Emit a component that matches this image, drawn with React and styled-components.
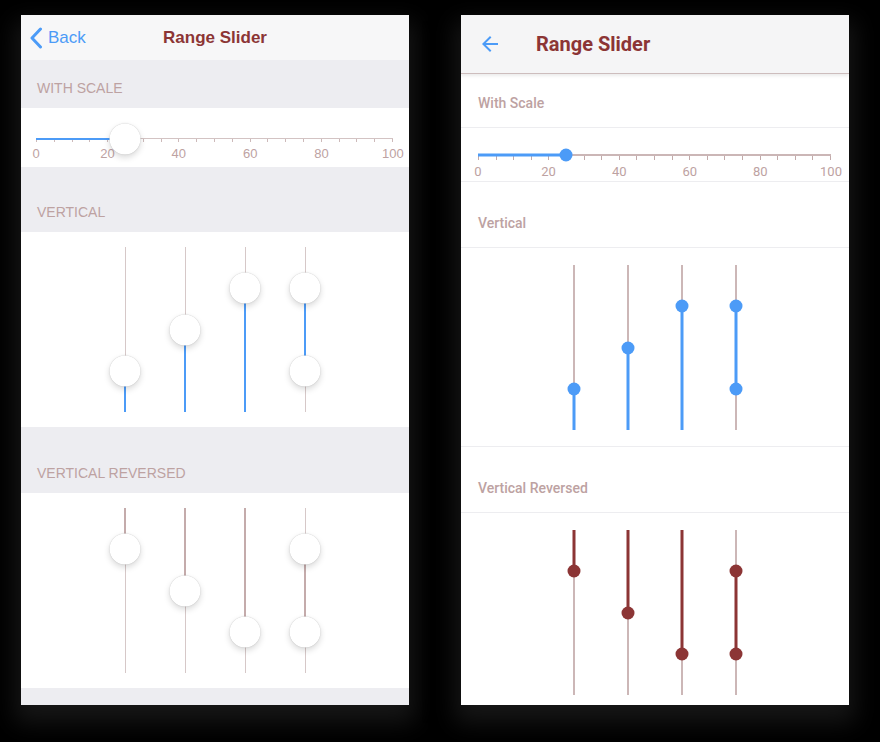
import styled, { createGlobalStyle } from "styled-components";

const BLUE = "#4c9bf7";
const MAROON = "#8c3535";
const ROSE = "#bda2a2";
const ROSE_SOLID = "#c4abab";

const GlobalStyle = createGlobalStyle`
  html, body { margin: 0; padding: 0; background: #000; }
  * { box-sizing: border-box; }
`;

const Stage = styled.div`
  width: 880px;
  height: 742px;
  background: #000;
  display: flex;
  align-items: flex-start;
  gap: 52px;
  padding: 15px 0 0 21px;
`;

const Phone = styled.div`
  width: 388px;
  height: 690px;
  background: ${(p) => (p.$md ? "#fff" : "#ededf1")};
  overflow: hidden;
  display: flex;
  flex-direction: column;
  box-shadow: 0 12px 22px 6px #161616;
  font-family: ${(p) =>
    p.$md ? 'Roboto, "Liberation Sans", sans-serif' : '"Liberation Sans", Arial, sans-serif'};
`;

/* ---------- iOS parts ---------- */

const IosNav = styled.div`
  flex: none;
  height: 45px;
  background: #f7f7f8;
  display: grid;
  grid-template-columns: 1fr auto 1fr;
  align-items: center;
`;

const BackButton = styled.div`
  display: flex;
  align-items: center;
  gap: 5px;
  padding-left: 8px;
  color: ${BLUE};
  font-size: 17px;
`;

const IosTitle = styled.div`
  font-size: 17px;
  font-weight: 700;
  color: ${MAROON};
`;

const IosSection = styled.div`
  flex: none;
  height: ${(p) => p.$h}px;
  display: flex;
  align-items: flex-end;
  padding: 0 16px 12px;
  background: #ededf1;
  color: ${ROSE};
  font-size: 14px;
  line-height: 16px;
  text-transform: uppercase;
`;

const IosRow = styled.div`
  flex: none;
  height: ${(p) => p.$h}px;
  background: #fff;
`;

/* ---------- Material parts ---------- */

const MdBar = styled.div`
  flex: none;
  height: 59px;
  display: flex;
  align-items: center;
  padding-left: 17px;
  background: #f5f5f6;
  border-bottom: 1px solid #cdbdbd;
  box-shadow: 0 2px 3px rgba(0, 0, 0, 0.08);
  position: relative;
  z-index: 1;
`;

const MdTitle = styled.div`
  margin-left: 34px;
  font-size: 20px;
  font-weight: 700;
  color: ${MAROON};
`;

const MdSection = styled.div`
  flex: none;
  height: ${(p) => p.$h}px;
  display: flex;
  align-items: flex-end;
  padding: 0 17px 16px;
  color: ${ROSE};
  font-size: 14px;
  font-weight: 500;
  line-height: 16px;
  border-bottom: 1px solid #ededf0;
`;

const MdRow = styled.div`
  flex: none;
  height: ${(p) => p.$h}px;
  border-bottom: ${(p) => (p.$last ? "none" : "1px solid #ededf0")};
`;

/* ---------- slider parts ---------- */

const HWrap = styled.div`
  padding: ${(p) => (p.$md ? "26px 18px 0 17px" : "30px 16px 0 15px")};
`;

const HTrack = styled.div`
  position: relative;
  height: ${(p) => (p.$md ? 2 : 1)}px;
  background: ${(p) => (p.$md ? "#cbb6b6" : "#d3c3c3")};
`;

const HFill = styled.div`
  position: absolute;
  left: 0;
  top: 50%;
  height: ${(p) => (p.$md ? 3 : 2)}px;
  transform: translateY(-50%);
  background: ${BLUE};
`;

const Thumb = styled.div`
  position: absolute;
  width: ${(p) => (p.$md ? 13 : 31)}px;
  height: ${(p) => (p.$md ? 13 : 31)}px;
  border-radius: 50%;
  transform: translate(-50%, -50%);
  background: ${(p) => (p.$md ? p.$color : "#fff")};
  box-shadow: ${(p) =>
    p.$md ? "none" : "0 3px 6px rgba(0, 0, 0, 0.15), 0 0 1px rgba(0, 0, 0, 0.25)"};
`;

const TickRow = styled.div`
  display: flex;
  justify-content: space-between;
`;

const Tick = styled.div`
  width: 1px;
  height: ${(p) => (p.$md ? 4 : 3)}px;
  background: ${(p) => (p.$md ? "#c2aaaa" : "#cdbaba")};
`;

const LabelRow = styled.div`
  display: flex;
  justify-content: space-between;
  margin-top: ${(p) => (p.$md ? 5 : 5)}px;
`;

const Label = styled.div`
  width: 0;
  display: flex;
  justify-content: center;
  white-space: nowrap;
  font-size: 13px;
  line-height: 14px;
  color: ${ROSE};
`;

const VGroup = styled.div`
  display: flex;
  justify-content: center;
  padding-top: ${(p) => p.$top}px;
`;

const VCol = styled.div`
  width: ${(p) => (p.$md ? 54 : 60)}px;
  display: flex;
  justify-content: center;
`;

const VTrack = styled.div`
  position: relative;
  width: ${(p) => (p.$md ? 2 : 1)}px;
  height: 165px;
  background: ${(p) => (p.$md ? "#ccb7b7" : "#d6c8c8")};
`;

const VFill = styled.div`
  position: absolute;
  left: 50%;
  width: ${(p) => (p.$md ? 3 : 2)}px;
  transform: translateX(-50%);
  background: ${(p) => p.$color};
`;

const HSlider = ({ value, md }) => (
  <HWrap $md={md}>
    <HTrack $md={md}>
      <HFill $md={md} style={{ width: `${value}%` }} />
      <Thumb $md={md} $color={BLUE} style={{ left: `${value}%`, top: "50%" }} />
    </HTrack>
    <TickRow>
      {Array.from({ length: 21 }, (_, i) => (
        <Tick key={i} $md={md} />
      ))}
    </TickRow>
    <LabelRow $md={md}>
      {[0, 20, 40, 60, 80, 100].map((n) => (
        <Label key={n}>{n}</Label>
      ))}
    </LabelRow>
  </HWrap>
);

const VSlider = ({ values, reversed, md, color }) => {
  const pos = (v) => (reversed ? v : 100 - v);
  let from;
  let to;
  if (values.length === 1) {
    [from, to] = reversed ? [0, values[0]] : [100 - values[0], 100];
  } else {
    const ps = values.map(pos);
    from = Math.min(...ps);
    to = Math.max(...ps);
  }
  return (
    <VCol $md={md}>
      <VTrack $md={md}>
        <VFill $md={md} $color={color} style={{ top: `${from}%`, height: `${to - from}%` }} />
        {values.map((v, i) => (
          <Thumb key={i} $md={md} $color={color} style={{ top: `${pos(v)}%`, left: "50%" }} />
        ))}
      </VTrack>
    </VCol>
  );
};

const SETS = [[25], [50], [75], [25, 75]];

const VGroupOf = ({ reversed, md, color, top }) => (
  <VGroup $top={top}>
    {SETS.map((values, i) => (
      <VSlider key={i} values={values} reversed={reversed} md={md} color={color} />
    ))}
  </VGroup>
);

const Chevron = () => (
  <svg width="14" height="22" viewBox="0 0 14 22">
    <path d="M11.5 2 L3 11 L11.5 20" fill="none" stroke={BLUE} strokeWidth="3" strokeLinecap="round" strokeLinejoin="round" />
  </svg>
);

const ArrowBack = () => (
  <svg width="24" height="24" viewBox="0 0 24 24">
    <path d="M20 11H7.83l5.59-5.59L12 4l-8 8 8 8 1.41-1.41L7.83 13H20v-2z" fill={BLUE} />
  </svg>
);

const IosScreen = () => (
  <Phone>
    <IosNav>
      <BackButton>
        <Chevron />
        Back
      </BackButton>
      <IosTitle>Range Slider</IosTitle>
      <div />
    </IosNav>
    <IosSection $h={48}>With Scale</IosSection>
    <IosRow $h={59}>
      <HSlider value={25} />
    </IosRow>
    <IosSection $h={65}>Vertical</IosSection>
    <IosRow $h={195}>
      <VGroupOf color={BLUE} top={15} />
    </IosRow>
    <IosSection $h={66}>Vertical Reversed</IosSection>
    <IosRow $h={195}>
      <VGroupOf reversed color={ROSE_SOLID} top={15} />
    </IosRow>
    <IosSection $h={17} />
  </Phone>
);

const MdScreen = () => (
  <Phone $md>
    <MdBar>
      <ArrowBack />
      <MdTitle>Range Slider</MdTitle>
    </MdBar>
    <MdSection $h={54}>With Scale</MdSection>
    <MdRow $h={54}>
      <HSlider value={25} md />
    </MdRow>
    <MdSection $h={66}>Vertical</MdSection>
    <MdRow $h={199}>
      <VGroupOf md color={BLUE} top={17} />
    </MdRow>
    <MdSection $h={66}>Vertical Reversed</MdSection>
    <MdRow $h={192} $last>
      <VGroupOf md reversed color={MAROON} top={17} />
    </MdRow>
  </Phone>
);

export default function App() {
  return (
    <>
      <GlobalStyle />
      <Stage>
        <IosScreen />
        <MdScreen />
      </Stage>
    </>
  );
}
